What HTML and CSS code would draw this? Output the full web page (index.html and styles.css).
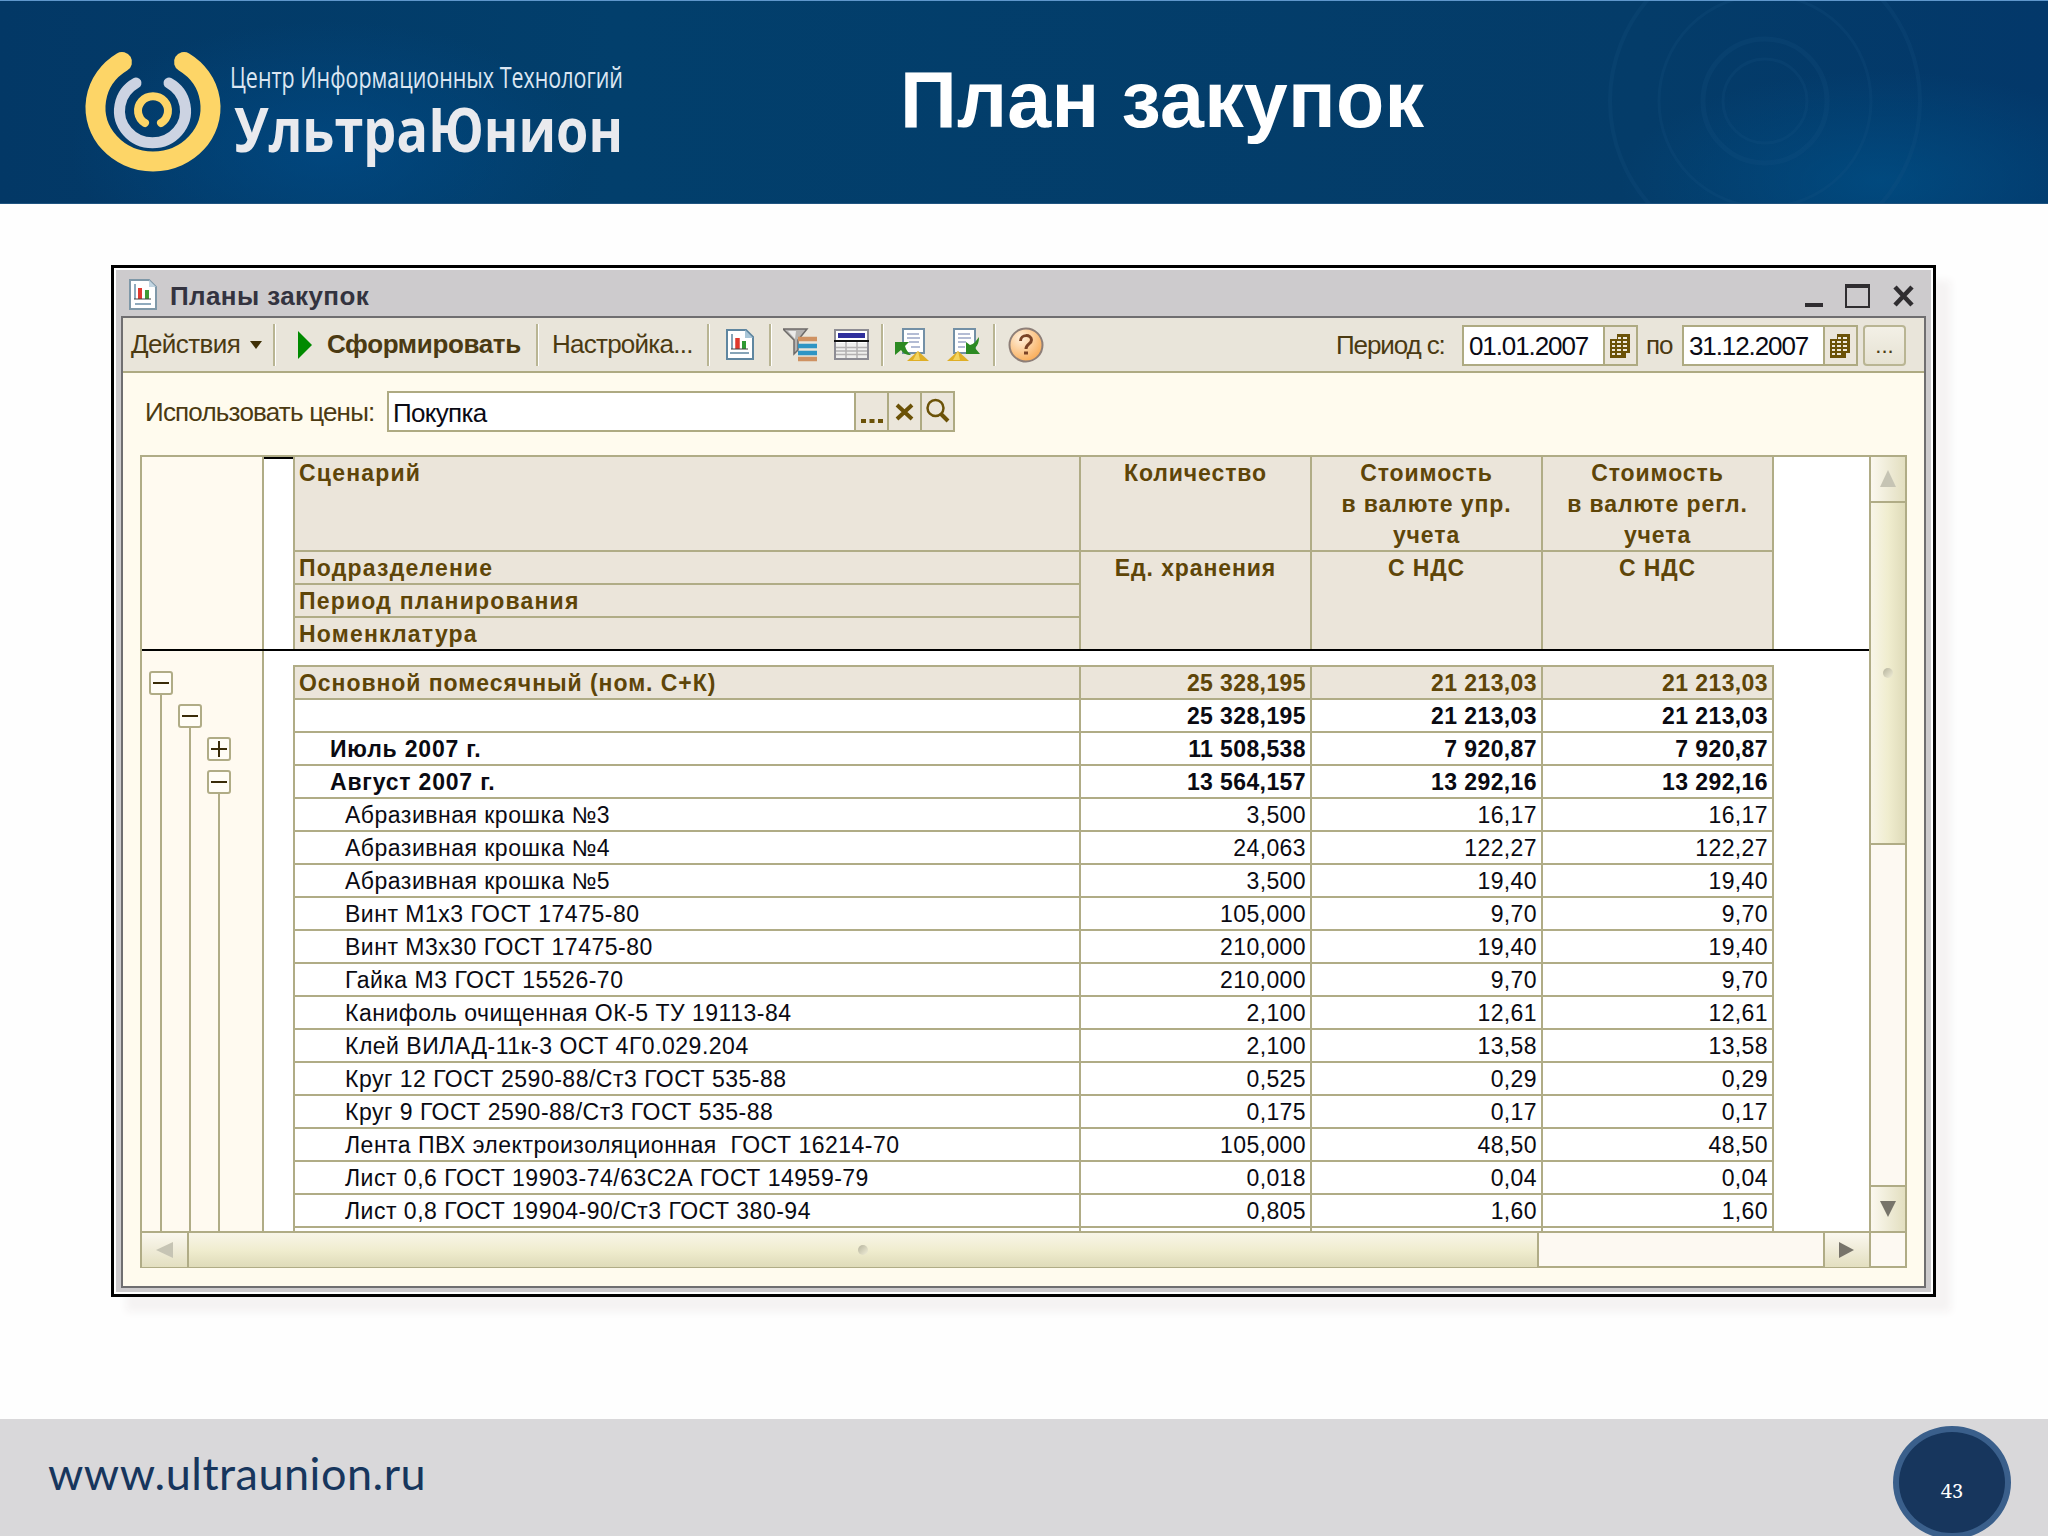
FILE: index.html
```html
<!DOCTYPE html>
<html lang="ru">
<head>
  <meta charset="UTF-8">
  <title>План закупок</title>
  <link rel="stylesheet" href="styles.css">
</head>
<body>
<header class="header">
  <svg class="logo" width="570" height="150" viewBox="0 0 570 150">
    <g fill="none" stroke-linecap="round">
      <path stroke="#fdd567" stroke-width="20" d="M37 20A57.500 54 0 1 0 99 20"/>
      <path stroke="#ccd3e2" stroke-width="11" d="M51 41A33 32 0 1 0 84 41"/>
      <path stroke="#fdd567" stroke-width="8" d="M60 81A15 14.500 0 1 1 76 81"/>
    </g>
    <text class="logo-small" x="145" y="46" textLength="393" lengthAdjust="spacingAndGlyphs">Центр Информационных Технологий</text>
    <text class="logo-big" x="149" y="110" textLength="389" lengthAdjust="spacingAndGlyphs">УльтраЮнион</text>
  </svg>
  <h1>План закупок</h1>
  <svg class="rings" width="340" height="202" viewBox="0 0 340 202" fill="none" stroke="#1a5585">
    <circle cx="160" cy="100" r="155" stroke-width="4"/>
    <circle cx="160" cy="100" r="106" stroke-width="3"/>
    <circle cx="160" cy="100" r="62" stroke-width="5"/>
    <circle cx="160" cy="100" r="42" stroke-width="3"/>
  </svg>
</header>

<main class="window">
  <div class="frame">
    <div class="titlebar">
      <svg class="title-icon" width="28" height="31" viewBox="0 0 28 31">
        <path d="M1 1h19l7 7v22H1z" fill="#fff" stroke="#7f98a8" stroke-width="2"/>
        <path d="M20 1v7h7z" fill="#c3d6e2"/>
        <path d="M6 5v15M6 25h16" stroke="#6b8fa8" stroke-width="1.500"/>
        <path d="M11 9v11" stroke="#e03a30" stroke-width="4"/>
        <path d="M18 11v9" stroke="#3f9a33" stroke-width="4"/>
        <path d="M5 20h17" stroke="#444" stroke-width="1"/>
      </svg>
      <span class="title-text">Планы закупок</span>
      <svg class="win-buttons" width="112" height="26" viewBox="0 0 112 26" fill="none" stroke="#2f2d30">
        <path d="M0 22h18" stroke-width="4"/>
        <path d="M41 2h23v22H41z" stroke-width="2"/>
        <path d="M40 3h25" stroke-width="4"/>
        <path d="M90 4l17 18M107 4L90 22" stroke-width="4.500"/>
      </svg>
    </div>

    <div class="client">
      <div class="toolbar">
        <span class="tb-actions">Действия</span>
        <i class="caret"></i>
        <i class="sep sep-1"></i>
        <svg class="play" width="14" height="28" viewBox="0 0 14 28"><path d="M0 0l14 14L0 28z" fill="#008a00"/></svg>
        <span class="tb-run">Сформировать</span>
        <i class="sep sep-2"></i>
        <span class="tb-setup">Настройка...</span>
        <i class="sep sep-3"></i>
        <svg class="ic-report" width="28" height="31" viewBox="0 0 28 31">
          <path d="M1 1h19l7 7v22H1z" fill="#fff" stroke="#5f86a0" stroke-width="2"/>
          <path d="M19 1v8h8z" fill="#a9c6d8"/>
          <path d="M6 5v15M4 24h19" stroke="#5f86a0" stroke-width="1.500"/>
          <path d="M11.500 9v11" stroke="#e0392c" stroke-width="4.500"/>
          <path d="M18 12v8" stroke="#2f9a33" stroke-width="4"/>
          <path d="M5 20h17" stroke="#444"/>
        </svg>
        <i class="sep sep-4"></i>
        <svg class="ic-filter" width="34" height="34" viewBox="0 0 34 34">
          <path d="M0 1h24l-9 11v10l-4 4V12z" fill="#b5b3b1" stroke="#6d6a68" stroke-width="1.500"/>
          <path d="M5 3h8l-1 8z" fill="#ecebea"/>
          <path d="M15 11h19M15 31h19" stroke="#cf9262" stroke-width="4.500"/>
          <path d="M15 18h19M15 25h19" stroke="#2e95c4" stroke-width="4.500"/>
        </svg>
        <svg class="ic-table" width="35" height="31" viewBox="0 0 35 31">
          <path d="M1 1h33v29H1z" fill="#fff" stroke="#8d8c93" stroke-width="2"/>
          <path d="M4 6.500h27" stroke="#2f2f9c" stroke-width="5"/>
          <path d="M2 14h31v15H2z" fill="#efefed"/>
          <path d="M2 18.500h31M2 22h31M2 25.500h31M12 13v16M23 13v16" stroke="#b3b1b1" stroke-width="1.500"/>
          <path d="M0 12h35" stroke="#111" stroke-width="2"/>
        </svg>
        <i class="sep sep-5"></i>
        <svg class="ic-load" width="34" height="34" viewBox="0 0 34 34">
          <path d="M8 1h21v24H8z" fill="#fff" stroke="#7390a6" stroke-width="2"/>
          <path d="M12 6h12M12 10h13M14 14h10M16 19h9" stroke="#b3bcd4" stroke-width="2"/>
          <path d="M0 14h14l-4 4c1 4 3 6 6 9-5 0-8-2-10-5l-6 5z" fill="#2c8a22"/>
          <path d="M23 23l11 10H12z" fill="#dfae25"/>
          <path d="M23 23l2 9h-7z" fill="#f4d45e"/>
        </svg>
        <svg class="ic-save" width="34" height="34" viewBox="0 0 34 34">
          <path d="M7 1h21v24H7z" fill="#fff" stroke="#7390a6" stroke-width="2"/>
          <path d="M11 6h12M11 10h13M11 14h8M11 19h7" stroke="#b3bcd4" stroke-width="2"/>
          <path d="M19 14l4 3c4-1 6-4 9-8 0 5-1 8-4 11l5 6H19z" fill="#2c8a22"/>
          <path d="M11 23l11 10H0z" fill="#dfae25"/>
          <path d="M11 23l2 9H6z" fill="#f4d45e"/>
        </svg>
        <i class="sep sep-6"></i>
        <svg class="ic-help" width="36" height="36" viewBox="0 0 36 36">
          <defs>
            <radialGradient id="orange" cx=".35" cy=".3" r=".75">
              <stop offset="0" stop-color="#fff0dd"/>
              <stop offset="1" stop-color="#f9ab55"/>
            </radialGradient>
          </defs>
          <circle cx="18" cy="18" r="16.500" fill="url(#orange)" stroke="#8e7f78" stroke-width="2"/>
          <path d="M12.500 14c0-7 11-7 11-1 0 4-5.500 4-5.500 9" fill="none" stroke="#7a4326" stroke-width="3"/>
          <path d="M16 26h4" stroke="#7a4326" stroke-width="3"/>
        </svg>
        <div class="period">
          <span class="lbl-from">Период с:</span>
          <div class="date">
            <span>01.01.2007</span>
            <b><svg width="22" height="26" viewBox="0 0 22 26"><path d="M8 1h13v19h-4v5H1V6h7z" fill="#6b5208"/><path d="M3 9h3M8 9h4M14 9h4M3 13h3M8 13h4M14 13h4M3 17h3M8 17h4M14 17h4M3 21h3M8 21h4M9 5h3M14 5h4" stroke="#efe9dc" stroke-width="2"/></svg></b>
          </div>
          <span class="lbl-to">по</span>
          <div class="date">
            <span>31.12.2007</span>
            <b><svg width="22" height="26" viewBox="0 0 22 26"><path d="M8 1h13v19h-4v5H1V6h7z" fill="#6b5208"/><path d="M3 9h3M8 9h4M14 9h4M3 13h3M8 13h4M14 13h4M3 17h3M8 17h4M14 17h4M3 21h3M8 21h4M9 5h3M14 5h4" stroke="#efe9dc" stroke-width="2"/></svg></b>
          </div>
          <span class="more">...</span>
        </div>
      </div>

      <div class="prices">
        <span class="prices-label">Использовать цены:</span>
        <div class="prices-input">
          <span>Покупка</span>
          <b><svg width="24" height="30" viewBox="0 0 24 30"><path d="M1 24h5M9.500 24h5M18 24h5" stroke="#6b5208" stroke-width="4"/></svg></b>
          <b><svg width="24" height="30" viewBox="0 0 24 30"><path d="M4 8l15 14M19 8L4 22" stroke="#6b5208" stroke-width="4"/></svg></b>
          <b><svg width="24" height="30" viewBox="0 0 24 30"><circle cx="9.500" cy="11" r="8" fill="none" stroke="#6b5208" stroke-width="2.500"/><path d="M15 17l7 7" stroke="#6b5208" stroke-width="4"/></svg></b>
        </div>
      </div>

      <div class="report">
        <div class="sheet">
          <div class="head">
            <div class="tree-head"></div>
            <div class="gutter gutter-head"></div>
            <div class="head-grid">
              <div class="h-scenario">Сценарий</div>
              <div class="h-num">Количество</div>
              <div class="h-num">Стоимость<br>в валюте упр.<br>учета</div>
              <div class="h-num">Стоимость<br>в валюте регл.<br>учета</div>
              <div class="h-name">Подразделение</div>
              <div class="h-num h-unit">Ед. хранения</div>
              <div class="h-num h-unit">С НДС</div>
              <div class="h-num h-unit">С НДС</div>
              <div class="h-name">Период планирования</div>
              <div class="h-name h-last">Номенклатура</div>
            </div>
          </div>

          <div class="body">
            <div class="tree">
              <div class="branch branch-1"><i class="node"></i></div>
              <div class="branch branch-2"><i class="node"></i></div>
              <div class="branch branch-3"><i class="node plus"></i><i class="node"></i></div>
            </div>
            <div class="gutter"></div>
            <div class="rows">
              <div class="row total"><span>Основной помесячный (ном. С+К)</span><span>25 328,195</span><span>21 213,03</span><span>21 213,03</span></div>
              <div class="row group"><span></span><span>25 328,195</span><span>21 213,03</span><span>21 213,03</span></div>
              <div class="row group"><span>Июль 2007 г.</span><span>11 508,538</span><span>7 920,87</span><span>7 920,87</span></div>
              <div class="row group"><span>Август 2007 г.</span><span>13 564,157</span><span>13 292,16</span><span>13 292,16</span></div>
              <div class="row"><span>Абразивная крошка №3</span><span>3,500</span><span>16,17</span><span>16,17</span></div>
              <div class="row"><span>Абразивная крошка №4</span><span>24,063</span><span>122,27</span><span>122,27</span></div>
              <div class="row"><span>Абразивная крошка №5</span><span>3,500</span><span>19,40</span><span>19,40</span></div>
              <div class="row"><span>Винт М1х3 ГОСТ 17475-80</span><span>105,000</span><span>9,70</span><span>9,70</span></div>
              <div class="row"><span>Винт М3х30 ГОСТ 17475-80</span><span>210,000</span><span>19,40</span><span>19,40</span></div>
              <div class="row"><span>Гайка М3 ГОСТ 15526-70</span><span>210,000</span><span>9,70</span><span>9,70</span></div>
              <div class="row"><span>Канифоль очищенная ОК-5 ТУ 19113-84</span><span>2,100</span><span>12,61</span><span>12,61</span></div>
              <div class="row"><span>Клей ВИЛАД-11к-3 ОСТ 4Г0.029.204</span><span>2,100</span><span>13,58</span><span>13,58</span></div>
              <div class="row"><span>Круг 12 ГОСТ 2590-88/Ст3 ГОСТ 535-88</span><span>0,525</span><span>0,29</span><span>0,29</span></div>
              <div class="row"><span>Круг 9 ГОСТ 2590-88/Ст3 ГОСТ 535-88</span><span>0,175</span><span>0,17</span><span>0,17</span></div>
              <div class="row"><span>Лента ПВХ электроизоляционная&nbsp; ГОСТ 16214-70</span><span>105,000</span><span>48,50</span><span>48,50</span></div>
              <div class="row"><span>Лист 0,6 ГОСТ 19903-74/63С2А ГОСТ 14959-79</span><span>0,018</span><span>0,04</span><span>0,04</span></div>
              <div class="row"><span>Лист 0,8 ГОСТ 19904-90/Ст3 ГОСТ 380-94</span><span>0,805</span><span>1,60</span><span>1,60</span></div>
              <div class="row"><span></span><span></span><span></span><span></span></div>
            </div>
          </div>
        </div>

        <div class="vscroll">
          <div class="v-up"><svg width="18" height="18" viewBox="0 0 18 18"><path d="M9 0l8 17H1z" fill="#c6c4b4"/></svg></div>
          <div class="v-thumb"><i class="grip"></i></div>
          <div class="v-track"></div>
          <div class="v-down"><svg width="18" height="18" viewBox="0 0 18 18"><path d="M1 1h16L9 17z" fill="#77746a"/></svg></div>
        </div>

        <div class="hscroll">
          <div class="h-left"><svg width="18" height="18" viewBox="0 0 18 18"><path d="M0 9l17-8v16z" fill="#c6c4b4"/></svg></div>
          <div class="h-thumb"><i class="grip"></i></div>
          <div class="h-track"></div>
          <div class="h-right"><svg width="18" height="18" viewBox="0 0 18 18"><path d="M1 1l15 8-15 8z" fill="#77746a"/></svg></div>
        </div>
        <div class="corner"></div>
      </div>
    </div>
  </div>
</main>

<footer class="footer">
  <span class="site">www.ultraunion.ru</span>
  <span class="page">43</span>
</footer>
</body>
</html>
```
FILE: styles.css
```css
* {
  margin: 0;
  padding: 0;
  box-sizing: border-box;
}

body {
  width: 2048px;
  height: 1536px;
  overflow: hidden;
  display: flex;
  flex-direction: column;
  background: #fefefe;
  font-family: "Liberation Sans", Arial, sans-serif;
}

svg {
  display: block;
  flex: none;
}

/* header */
.header {
  position: relative;
  height: 204px;
  flex: none;
  display: flex;
  border-top: 1px solid #5f97cc;
  border-bottom: 1px solid #1f5480;
  background:
    radial-gradient(ellipse 260px 130px at 330px 150px, rgba(0, 75, 135, .7), transparent),
    radial-gradient(ellipse 260px 110px at 1880px 180px, rgba(0, 80, 135, .7), transparent),
    linear-gradient(90deg, #033866 0, #023f6c 30%, #043c69 80%, #03386a 100%);
}

.logo {
  margin: 41px 0 0 85px;
  overflow: visible;
}

.logo-small {
  font: 29px "Open Sans", sans-serif;
  fill: #dbe6f2;
}

.logo-big {
  font: bold 61px "Open Sans", sans-serif;
  fill: #e9eaee;
}

.header h1 {
  margin: 55px 0 0 245px;
  font-size: 79px;
  line-height: 88px;
  font-weight: bold;
  letter-spacing: .2px;
  color: #fff;
  white-space: nowrap;
}

.rings {
  position: absolute;
  left: 1605px;
  top: 0;
  opacity: .2;
}

/* window */
.window {
  width: 1825px;
  height: 1032px;
  flex: none;
  margin: 61px 0 0 111px;
  padding: 2px;
  border: 3px solid #000;
  background: #fff;
  box-shadow: 15px 15px 8px #f5f3f3;
}

.frame {
  height: 1022px;
  padding: 0 5px 5px;
  background: #cdcbcd;
}

.titlebar {
  height: 46px;
  display: flex;
  padding: 9px 9px 0 8px;
}

.title-text {
  margin-left: 13px;
  font-size: 26px;
  line-height: 34px;
  font-weight: bold;
  letter-spacing: .4px;
  color: #33333f;
}

.win-buttons {
  margin: 4px 0 0 auto;
}

.client {
  height: 972px;
  border: 2px solid #6f6e70;
  background: #fffbee;
}

/* toolbar */
.toolbar {
  height: 55px;
  display: flex;
  align-items: center;
  padding: 0 18px 0 8px;
  border-bottom: 2px solid #aeaa82;
  background: #e9e5da;
  color: #4b3a12;
  font-size: 26px;
  white-space: nowrap;
}

.tb-actions {
  width: 110px;
  letter-spacing: -.6px;
}

.tb-run {
  width: 195px;
  margin-left: 15px;
  font-weight: bold;
  letter-spacing: -.35px;
}

.tb-setup {
  width: 142px;
  margin-left: 13px;
  letter-spacing: -.75px;
}

.caret {
  margin: 1px 0 0 9px;
  border: 6px solid transparent;
  border-top: 8px solid #3f3006;
  border-bottom: 0;
}

.play {
  margin-left: 22px;
}

.sep {
  width: 3px;
  height: 42px;
  border-left: 2px solid #b9b593;
  border-right: 1px solid #fff;
}

.sep-1 { margin-left: 11px; }
.sep-2 { margin-left: 14px; }
.sep-3 { margin-left: 13px; }
.sep-4 { margin-left: 15px; }
.sep-5 { margin-left: 12px; }
.sep-6 { margin-left: 12px; }

.ic-report { margin-left: 16px; }
.ic-filter { margin-left: 11px; }
.ic-table { margin-left: 17px; }
.ic-load { margin-left: 11px; }
.ic-save { margin-left: 18px; }
.ic-help { margin-left: 12px; }

.period {
  display: flex;
  align-items: center;
  margin: 2px 0 0 auto;
}

.lbl-from {
  width: 126px;
  letter-spacing: -1.1px;
}

.lbl-to {
  width: 36px;
  margin-left: 8px;
  letter-spacing: -1.2px;
}

.date {
  display: flex;
  width: 176px;
  height: 41px;
  border: 2px solid #aeaa82;
  background: #fff;
  color: #0a0a14;
  line-height: 38px;
}

.date span {
  width: 139px;
  padding-left: 5px;
  letter-spacing: -1.1px;
}

.date b {
  width: 33px;
  padding: 6px 0 0 4px;
  border-left: 2px solid #aeaa82;
  background: #ebe6db;
}

.more {
  width: 43px;
  height: 41px;
  margin-left: 5px;
  border: 2px solid #b9b593;
  border-radius: 4px;
  background: linear-gradient(#f3f0e6, #e6e2d3);
  text-align: center;
  font-size: 22px;
  line-height: 38px;
}

/* price filter */
.prices {
  display: flex;
  align-items: center;
  height: 41px;
  margin: 18px 0 0 22px;
  color: #4b3a12;
  font-size: 26px;
  white-space: nowrap;
}

.prices-label {
  width: 242px;
  padding-top: 2px;
  letter-spacing: -.8px;
}

.prices-input {
  display: flex;
  width: 568px;
  height: 41px;
  border: 2px solid #aeaa82;
  background: #fff;
  color: #0a0a14;
  line-height: 40px;
}

.prices-input span {
  flex: 1;
  padding-left: 4px;
  letter-spacing: -.7px;
}

.prices-input b {
  width: 33px;
  padding: 4px 0 0 4px;
  border-left: 2px solid #aeaa82;
  background: #ebe6db;
}

/* report */
.report {
  display: grid;
  grid-template-columns: 1727px 36px;
  grid-template-rows: 774px 36px;
  width: 1767px;
  height: 813px;
  margin: 23px 0 0 17px;
  border: 2px solid #b0ac86;
  background: #fdf9f2;
  font-size: 23px;
}

.sheet {
  display: flex;
  flex-direction: column;
  overflow: hidden;
  background: #fff;
}

.head {
  display: flex;
  height: 194px;
  flex: none;
  border-bottom: 2px solid #000;
}

.tree-head {
  width: 122px;
  border-right: 2px solid #b0ac86;
  background: #fffaf0;
}

.gutter {
  width: 29px;
}

.gutter-head {
  border-top: 2px solid #000;
}

.head-grid {
  display: grid;
  grid-template-columns: 786px 231px 231px 231px;
  grid-template-rows: 95px 33px 33px 31px;
  border-left: 2px solid #b0ac86;
  background: #ebe5da;
  color: #5e4508;
  font-weight: bold;
  letter-spacing: 1.2px;
}

.head-grid > div {
  padding-top: 1px;
  border-right: 2px solid #b0ac86;
  border-bottom: 2px solid #b0ac86;
  line-height: 31px;
}

.head-grid .h-scenario,
.head-grid .h-name {
  padding-left: 4px;
}

.head-grid .h-num {
  text-align: center;
  letter-spacing: .9px;
}

.head-grid .h-unit {
  grid-row: 2 / 5;
  border-bottom: 0;
}

.head-grid .h-unit:nth-child(6) { grid-column: 2; }
.head-grid .h-unit:nth-child(7) { grid-column: 3; }
.head-grid .h-unit:nth-child(8) { grid-column: 4; }

.head-grid .h-last {
  border-bottom: 0;
}

.body {
  display: flex;
  height: 600px;
}

.tree {
  display: flex;
  gap: 5px;
  width: 122px;
  padding-left: 7px;
  border-right: 2px solid #b0ac86;
  background: #fffaf0;
}

.branch {
  display: flex;
  flex-direction: column;
  width: 24px;
}

.branch::after {
  content: "";
  flex: 1;
  width: 2px;
  margin-left: 11px;
  background: #b0ac86;
}

.branch-1 { padding-top: 20px; }
.branch-2 { padding-top: 53px; }
.branch-3 { padding-top: 86px; }

.node {
  width: 24px;
  height: 24px;
  border: 2px solid #b0ac86;
  border-radius: 3px;
  background: linear-gradient(#3a2c08, #3a2c08) center / 16px 2px no-repeat #fffdf6;
}

.plus {
  margin-bottom: 9px;
  background:
    linear-gradient(#3a2c08, #3a2c08) center / 16px 2px no-repeat,
    linear-gradient(#3a2c08, #3a2c08) center / 2px 16px no-repeat,
    #fffdf6;
}

.rows {
  margin-top: 14px;
  border-left: 2px solid #b0ac86;
  border-top: 2px solid #b0ac86;
  height: 620px;
}

.row {
  display: grid;
  grid-template-columns: 786px 231px 231px 231px;
  grid-template-rows: 33.03px;
  line-height: 32px;
  color: #0a0a12;
  letter-spacing: .4px;
  white-space: nowrap;
}

.row span {
  border-right: 2px solid #b0ac86;
  border-bottom: 2px solid #b0ac86;
  padding-right: 4px;
  text-align: right;
}

.row span:first-child {
  padding-left: 50px;
  text-align: left;
  letter-spacing: .5px;
}

.group,
.total {
  font-weight: bold;
}

.group span:first-child {
  padding-left: 35px;
  letter-spacing: .8px;
}

.total {
  background: #ebe5da;
  color: #5e4508;
}

.total span:first-child {
  padding-left: 4px;
  letter-spacing: .95px;
}

/* scrollbars */
.vscroll {
  display: flex;
  flex-direction: column;
  border-left: 2px solid #b0ac86;
}

.v-up,
.v-down {
  display: flex;
  align-items: center;
  justify-content: center;
  height: 46px;
  background: linear-gradient(90deg, #fbf8ef, #e3dfc0);
}

.v-up {
  border-bottom: 2px solid #b0ac86;
}

.v-down {
  border-top: 2px solid #b0ac86;
}

.v-thumb {
  display: flex;
  align-items: center;
  justify-content: center;
  height: 342px;
  border-bottom: 2px solid #b0ac86;
  background: linear-gradient(90deg, #f8f5e8, #f0edcf 50%, #dfdbb9);
}

.v-track {
  flex: 1;
}

.grip {
  width: 10px;
  height: 10px;
  border-radius: 5px;
  background: linear-gradient(135deg, #b5b39d, #f2efd8);
}

.hscroll {
  display: flex;
  border-top: 2px solid #b0ac86;
}

.h-left,
.h-right {
  display: flex;
  align-items: center;
  justify-content: center;
  background: linear-gradient(#fbf8ef, #e3dfc0);
}

.h-left {
  width: 47px;
  border-right: 2px solid #b0ac86;
}

.h-thumb {
  display: flex;
  align-items: center;
  justify-content: center;
  width: 1350px;
  border-right: 2px solid #b0ac86;
  background: linear-gradient(#f8f5e8, #f0edcf 50%, #dfdbb9);
}

.h-track {
  flex: 1;
}

.h-right {
  width: 46px;
  border-left: 2px solid #b0ac86;
}

.corner {
  border-left: 2px solid #b0ac86;
  border-top: 2px solid #b0ac86;
}

/* footer */
.footer {
  display: flex;
  height: 117px;
  margin-top: auto;
  padding-left: 48px;
  background: #d9d8da;
  overflow: hidden;
}

.site {
  margin-top: 27px;
  font-family: Lato, sans-serif;
  font-size: 45px;
  line-height: 54px;
  letter-spacing: .5px;
  color: #17365d;
}

.page {
  width: 118px;
  height: 113px;
  margin: 7px 37px 0 auto;
  padding-top: 47px;
  border: 6px solid #3a5f8b;
  border-radius: 50%;
  background: #17365d;
  color: #fff;
  font: 20px/24px "Noto Serif", "DejaVu Serif", serif;
  text-align: center;
}
```
